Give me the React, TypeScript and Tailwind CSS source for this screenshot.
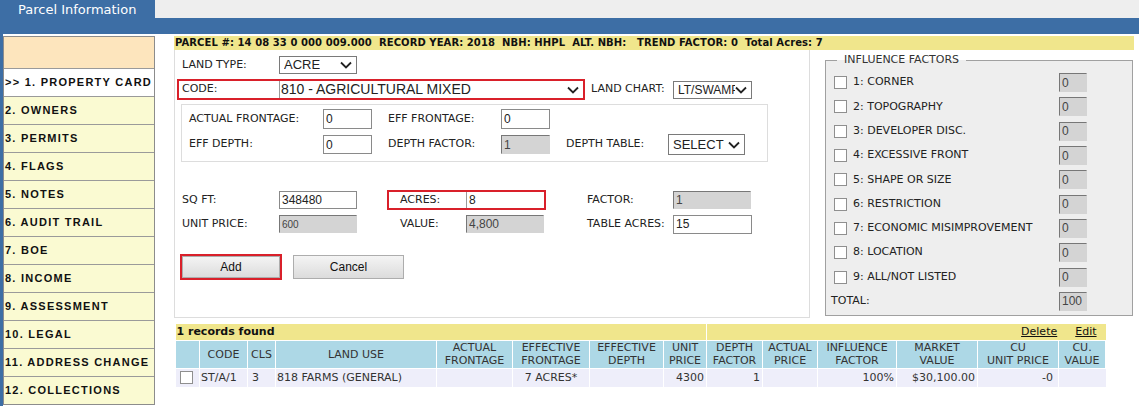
import React from 'react'

const navItems = [
  '>> 1. PROPERTY CARD',
  '2. OWNERS',
  '3. PERMITS',
  '4. FLAGS',
  '5. NOTES',
  '6. AUDIT TRAIL',
  '7. BOE',
  '8. INCOME',
  '9. ASSESSMENT',
  '10. LEGAL',
  '11. ADDRESS CHANGE',
  '12. COLLECTIONS',
]

const factors = [
  '1: CORNER',
  '2: TOPOGRAPHY',
  '3: DEVELOPER DISC.',
  '4: EXCESSIVE FRONT',
  '5: SHAPE OR SIZE',
  '6: RESTRICTION',
  '7: ECONOMIC MISIMPROVEMENT',
  '8: LOCATION',
  '9: ALL/NOT LISTED',
]

const Chevron = ({ className = '' }: { className?: string }) => (
  <svg viewBox="0 0 12 8" className={className} fill="none" stroke="#222" strokeWidth="1.8">
    <path d="M1 1.5 L6 6.5 L11 1.5" />
  </svg>
)

const Select = ({ text, className = '', textClass = '' }: { text: string; className?: string; textClass?: string }) => (
  <div className={`flex items-center justify-between border border-[#7a7a7a] bg-white pl-[4px] pr-[4px] overflow-hidden font-['Liberation_Sans',Arial,sans-serif] ${className}`}>
    <span className={`whitespace-nowrap overflow-hidden ${textClass}`}>{text}</span>
    <Chevron className="w-[12px] h-[8px] shrink-0" />
  </div>
)

const Input = ({ value, className = '' }: { value: string; className?: string }) => (
  <input
    readOnly
    value={value}
    className={`border border-[#8a8a8a] bg-white px-[2px] text-[12px] leading-none text-[#222] font-['Liberation_Sans',Arial,sans-serif] outline-none ${className}`}
  />
)

const Gray = ({ value, className = '' }: { value: string; className?: string }) => (
  <input
    readOnly
    value={value}
    className={`border border-[#d4d4d4] border-t-[#777] border-l-[#777] bg-[#d4d4d4] px-[2px] text-[12px] leading-none text-[#444] font-['Liberation_Sans',Arial,sans-serif] outline-none ${className}`}
  />
)

const Box = () => <span className="inline-block w-[13px] h-[13px] border border-[#8f8f8f] bg-white shrink-0" />

const App = () => {
  return (
    <div className="w-[1139px] h-[406px] overflow-hidden bg-white text-[11px] text-[#222] font-['DejaVu_Sans',Verdana,sans-serif]">
      {/* tab strip */}
      <div className="flex h-[18px]">
        <div className="w-[155px] bg-[#3d6ea5] text-white text-[13px] leading-[20px] pl-[18px]">Parcel Information</div>
        <div className="flex-1 bg-[#eeeeee]" />
      </div>
      <div className="h-[16px] bg-[#3d6ea5]" />

      <div className="flex h-[372px] border-l-[3px] border-[#3d6ea5]">
        {/* left nav */}
        <div className="w-[152px] mt-[2px] border border-[#8c8c8c] self-start">
          <div className="h-[31px] bg-[#fde5bd]" />
          {navItems.map((item, i) => (
            <div
              key={item}
              className={`h-[28px] border-t border-[#9a9a9a] flex items-center pl-[1px] font-['Liberation_Sans',Arial,sans-serif] font-bold text-[11px] tracking-[1.25px] text-[#111] whitespace-nowrap ${i === 0 ? 'bg-white' : 'bg-[#fafad2]'}`}
            >
              {item}
            </div>
          ))}
        </div>

        {/* main */}
        <div className="ml-[19px] mt-[2px] w-[960px]">
          <div className="h-[14px] bg-[#f0e68c] font-bold text-[10px] leading-[14px] tracking-[0.08px] whitespace-pre pl-[1px] text-[#111]">
            {'PARCEL #: 14 08 33 0 000 009.000  RECORD YEAR: 2018  NBH: HHPL  ALT. NBH:   TREND FACTOR: 0  Total Acres: 7'}
          </div>

          <div className="flex">
            {/* land form */}
            <div className="w-[636px] h-[268px] border border-t-0 border-[#dddddd] flex flex-col">
              <div className="flex items-center mt-[6px] pl-[7px]">
                <span className="w-[97px]">LAND TYPE:</span>
                <Select text="ACRE" className="w-[78px] h-[18px]" textClass="text-[13px]" />
              </div>

              <div className="flex items-center mt-[5px]">
                <div className="ml-[2px] w-[408px] h-[21px] border-2 border-[#d9202a] flex items-center">
                  <span className="w-[100px] pl-[3px] shrink-0">CODE:</span>
                  <div className="flex-1 h-full flex items-center justify-between border-l border-[#9a9a9a] pl-[1px] pr-[4px] font-['Liberation_Sans',Arial,sans-serif] text-[14px]">
                    <span>810 - AGRICULTURAL MIXED</span>
                    <Chevron className="w-[12px] h-[8px]" />
                  </div>
                </div>
                <span className="ml-[6px] w-[82px]">LAND CHART:</span>
                <Select text="LT/SWAMP" className="w-[79px] h-[18px] pr-[3px]" textClass="text-[12px] w-[58px]" />
              </div>

              <div className="ml-[6px] mt-[4px] w-[587px] h-[58px] border border-[#dddddd] flex flex-col pl-[7px]">
                <div className="flex items-center mt-[4px] h-[20px]">
                  <span className="w-[134px]">ACTUAL FRONTAGE:</span>
                  <Input value="0" className="w-[49px] h-[20px]" />
                  <span className="ml-[16px] w-[113px]">EFF FRONTAGE:</span>
                  <Input value="0" className="w-[49px] h-[20px]" />
                </div>
                <div className="flex items-center mt-[5px] h-[21px]">
                  <span className="w-[134px]">EFF DEPTH:</span>
                  <Input value="0" className="w-[49px] h-[19px]" />
                  <span className="ml-[16px] w-[113px]">DEPTH FACTOR:</span>
                  <Gray value="1" className="w-[49px] h-[19px]" />
                  <span className="ml-[16px] w-[102px]">DEPTH TABLE:</span>
                  <Select text="SELECT" className="w-[77px] h-[21px] pl-[3px]" textClass="text-[13px]" />
                </div>
              </div>

              <div className="flex items-center mt-[28px] h-[20px] pl-[7px]">
                <span className="w-[97px]">SQ FT:</span>
                <Input value="348480" className="w-[78px] h-[18px]" />
                <div className="ml-[30px] w-[159px] h-[20px] border-2 border-[#d9202a] flex items-center">
                  <span className="w-[77px] pl-[11px] shrink-0">ACRES:</span>
                  <input
                    readOnly
                    value="8"
                    className="w-[78px] h-full border-l border-[#9a9a9a] bg-white px-[2px] text-[12px] leading-none font-['Liberation_Sans',Arial,sans-serif] outline-none"
                  />
                </div>
                <span className="ml-[41px] w-[86px]">FACTOR:</span>
                <Gray value="1" className="w-[78px] h-[18px]" />
              </div>

              <div className="flex items-center mt-[5px] h-[18px] pl-[7px]">
                <span className="w-[97px]">UNIT PRICE:</span>
                <Gray value="600" className="w-[78px] h-[18px] !text-[10px] font-['DejaVu_Sans',Verdana,sans-serif]" />
                <span className="ml-[43px] w-[66px]">VALUE:</span>
                <Gray value="4,800" className="w-[78px] h-[18px]" />
                <span className="ml-[43px] w-[86px]">TABLE ACRES:</span>
                <Input value="15" className="w-[79px] h-[19px]" />
              </div>

              <div className="flex items-center mt-[21px] pl-[5px]">
                <div className="w-[102px] h-[26px] border-2 border-[#d9202a]">
                  <div className="w-full h-full border border-[#adadad] bg-gradient-to-b from-[#f4f4f4] to-[#dcdcdc] flex items-center justify-center font-['Liberation_Sans',Arial,sans-serif] text-[12px] text-[#111]">
                    Add
                  </div>
                </div>
                <div className="ml-[11px] w-[111px] h-[24px] border border-[#adadad] bg-gradient-to-b from-[#f4f4f4] to-[#dcdcdc] flex items-center justify-center font-['Liberation_Sans',Arial,sans-serif] text-[12px] text-[#111]">
                  Cancel
                </div>
              </div>
            </div>

            {/* influence factors */}
            <fieldset className="ml-[15px] mt-[2px] w-[308px] h-[264px] border border-[#a0a0a0] bg-[#eeeeee] pl-[8px] pr-[45px]">
              <legend className="ml-[3px] px-[7px] text-[11px] text-[#333]">INFLUENCE FACTORS</legend>
              <div className="flex flex-col mt-[2px]">
                {factors.map((f) => (
                  <div key={f} className="flex items-center h-[24.3px]">
                    <Box />
                    <span className="ml-[6px] flex-1 text-[#222]">{f}</span>
                    <Gray value="0" className="w-[28px] h-[19px]" />
                  </div>
                ))}
                <div className="flex items-center h-[24.3px] -ml-[3px]">
                  <span className="flex-1">TOTAL:</span>
                  <Gray value="100" className="w-[28px] h-[19px]" />
                </div>
              </div>
            </fieldset>
          </div>

          {/* records */}
          <table className="mt-[6px] ml-[1px] w-[930px] table-fixed border-collapse text-[11px] text-[#333]">
            <colgroup>
              <col className="w-[24px]" />
              <col className="w-[48px]" />
              <col className="w-[28px]" />
              <col className="w-[161px]" />
              <col className="w-[76px]" />
              <col className="w-[77px]" />
              <col className="w-[74px]" />
              <col className="w-[43px]" />
              <col className="w-[56px]" />
              <col className="w-[55px]" />
              <col className="w-[79px]" />
              <col className="w-[81px]" />
              <col className="w-[81px]" />
              <col className="w-[47px]" />
            </colgroup>
            <tbody>
              <tr className="h-[16px] bg-[#f0e68c]">
                <td colSpan={8} className="border-r border-white font-bold text-[#111] pl-[1px] leading-[15px]">1 records found</td>
                <td colSpan={6} className="text-right pr-[9px] leading-[15px] text-[#111]">
                  <span className="underline">Delete</span>
                  <span className="underline ml-[18px]">Edit</span>
                </td>
              </tr>
              <tr className="h-[28px] bg-[#add8e6] text-center leading-[13px]">
                <td className="border border-white" />
                <td className="border border-white">CODE</td>
                <td className="border border-white">CLS</td>
                <td className="border border-white">LAND USE</td>
                <td className="border border-white">ACTUAL<br />FRONTAGE</td>
                <td className="border border-white">EFFECTIVE<br />FRONTAGE</td>
                <td className="border border-white">EFFECTIVE<br />DEPTH</td>
                <td className="border border-white">UNIT<br />PRICE</td>
                <td className="border border-white">DEPTH<br />FACTOR</td>
                <td className="border border-white">ACTUAL<br />PRICE</td>
                <td className="border border-white">INFLUENCE<br />FACTOR</td>
                <td className="border border-white">MARKET<br />VALUE</td>
                <td className="border border-white">CU<br />UNIT PRICE</td>
                <td className="border border-white">CU.<br />VALUE</td>
              </tr>
              <tr className="h-[19px] bg-[#eeeefa]">
                <td className="border-r border-white pl-[4px]"><span className="block w-[13px] h-[13px] border border-[#8f8f8f] bg-white" /></td>
                <td className="border-r border-white pl-[1px]">ST/A/1</td>
                <td className="border-r border-white pl-[4px]">3</td>
                <td className="border-r border-white pl-[1px] whitespace-nowrap">818 FARMS (GENERAL)</td>
                <td className="border-r border-white" />
                <td className="border-r border-white text-center">7 ACRES*</td>
                <td className="border-r border-white" />
                <td className="border-r border-white text-right pr-[2px]">4300</td>
                <td className="border-r border-white text-right pr-[2px]">1</td>
                <td className="border-r border-white" />
                <td className="border-r border-white text-right pr-[2px]">100%</td>
                <td className="border-r border-white text-right pr-[2px]">$30,100.00</td>
                <td className="border-r border-white text-right pr-[5px]">-0</td>
                <td />
              </tr>
            </tbody>
          </table>
        </div>
      </div>
    </div>
  )
}

export default App
